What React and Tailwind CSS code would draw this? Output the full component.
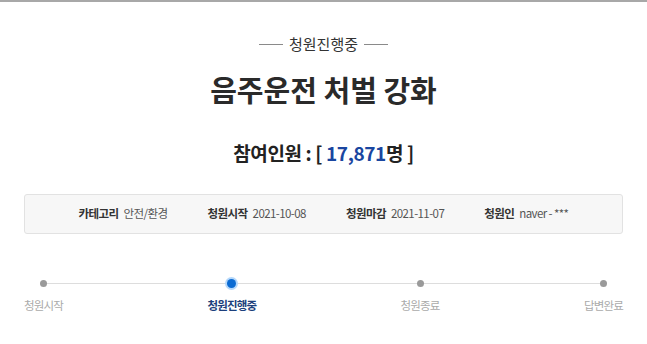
import React from "react";

const font = { fontFamily: '"Noto Sans CJK KR", "Noto Sans", sans-serif' };

function Step({ label, active }) {
  return (
    <div className="flex flex-col items-center">
      <div className="h-[10px] flex items-center justify-center">
        {active ? (
          <span className="block w-[9px] h-[9px] rounded-full bg-[#0b6bd3] shadow-[0_0_0_2px_#b5d8fb]" />
        ) : (
          <span className="block w-[7px] h-[7px] rounded-full bg-[#9a9a9a]" />
        )}
      </div>
      <div
        className={
          "mt-[9px] text-[11.5px] leading-[16px] tracking-[-0.07em] " +
          (active ? "font-bold text-[#1c3f7c]" : "text-[#aaaaaa]")
        }
      >
        {label}
      </div>
    </div>
  );
}

function Info({ label, value }) {
  return (
    <div className="flex items-center gap-[5px]">
      <span className="font-bold text-[#333]">{label}</span>
      <span className="text-[#555]">{value}</span>
    </div>
  );
}

export default function App() {
  return (
    <div className="w-[647px] h-[344px] bg-white overflow-hidden" style={font}>
      <div className="h-[2px] bg-[#a8a8a8]" />
      <div className="pt-[31px] flex items-center justify-center gap-[6px] text-[15px] leading-[22px] text-[#333]">
        <span className="block w-[24px] h-px bg-[#8a8a8a]" />
        <span>청원진행중</span>
        <span className="block w-[24px] h-px bg-[#8a8a8a]" />
      </div>
      <h1 className="mt-[14px] text-center text-[29px] leading-[40px] font-bold text-[#2a2a2a]">
        음주운전 처벌 강화
      </h1>
      <div className="mt-[31px] text-center text-[19px] leading-[26px] font-bold text-[#222] tracking-[-0.02em]">
        참여인원 : [ <span className="text-[#1a46a0]">17,871</span>명 ]
      </div>
      <div className="mt-[28px] mx-[24px] h-[40px] rounded-[3px] border border-[#e2e2e2] bg-[#f7f7f7] flex items-center justify-center gap-[40px] text-[11.5px] tracking-[-0.05em]">
        <Info label="카테고리" value="안전/환경" />
        <Info label="청원시작" value="2021-10-08" />
        <Info label="청원마감" value="2021-11-07" />
        <Info label="청원인" value="naver - ***" />
      </div>
      <div className="mt-[44px] mx-[24px] relative">
        <div className="absolute left-[19px] right-[20px] top-[4.5px] h-px bg-[#dddddd]" />
        <div className="relative flex justify-between">
          <Step label="청원시작" />
          <Step label="청원진행중" active />
          <Step label="청원종료" />
          <Step label="답변완료" />
        </div>
      </div>
    </div>
  );
}
